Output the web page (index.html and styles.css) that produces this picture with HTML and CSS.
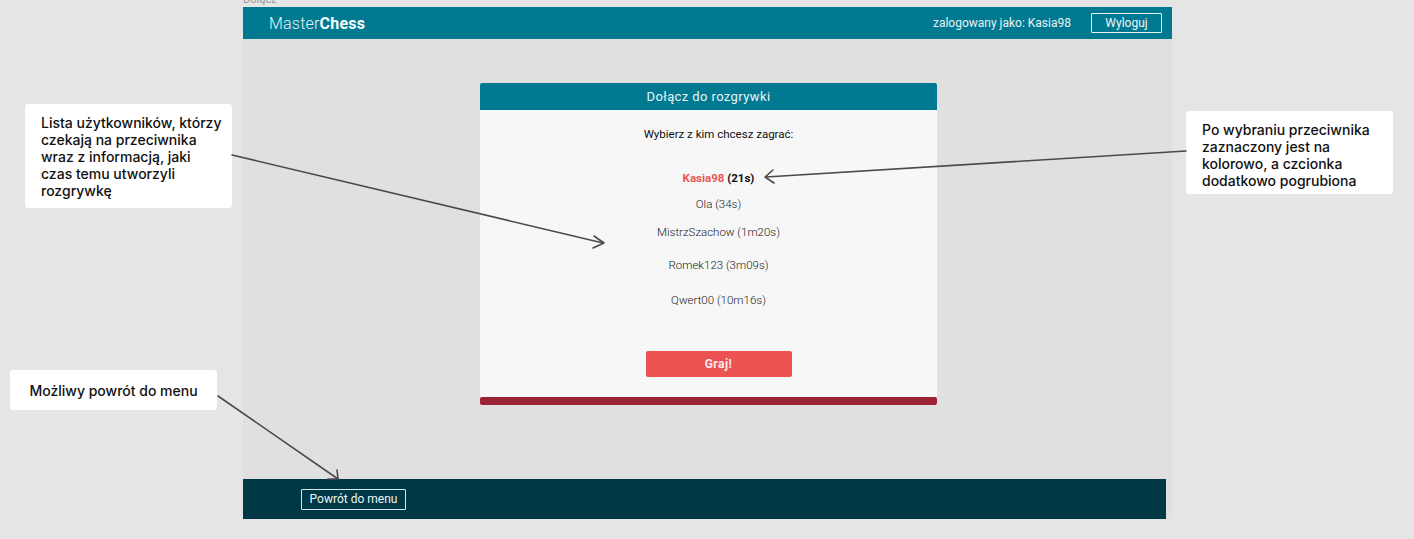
FILE: index.html
```html
<!DOCTYPE html>
<html lang="pl">
<head>
<meta charset="utf-8">
<title>MasterChess – Dołącz</title>
<link rel="stylesheet" href="styles.css">
</head>
<body>
<div class="canvas">
  <div class="frame-label">Dołącz</div>
  <div class="frame">
    <header class="topbar">
      <div class="logo"><span class="logo-light">Master</span><span class="logo-bold">Chess</span></div>
      <div class="user">
        <span class="user-text">zalogowany jako: Kasia98</span>
        <button class="btn-outline btn-logout">Wyloguj</button>
      </div>
    </header>
    <main class="main">
      <section class="card">
        <div class="card-head">Dołącz do rozgrywki</div>
        <div class="card-body">
          <p class="prompt">Wybierz z kim chcesz zagrać:</p>
          <ul class="players">
            <li class="player selected"><span class="sel-name">Kasia98</span> (21s)</li>
            <li class="player">Ola (34s)</li>
            <li class="player">MistrzSzachow (1m20s)</li>
            <li class="player">Romek123 (3m09s)</li>
            <li class="player">Qwert00 (10m16s)</li>
          </ul>
          <button class="btn-play">Graj!</button>
        </div>
        <div class="card-foot"></div>
      </section>
    </main>
    <footer class="bottombar">
      <button class="btn-outline btn-back">Powrót do menu</button>
    </footer>
  </div>

  <div class="note note-list">Lista użytkowników, którzy<br>czekają na przeciwnika<br>wraz z informacją, jaki<br>czas temu utworzyli<br>rozgrywkę</div>
  <div class="note note-selected">Po wybraniu przeciwnika<br>zaznaczony jest na<br>kolorowo, a czcionka<br>dodatkowo pogrubiona</div>
  <div class="note note-back">Możliwy powrót do menu</div>

  <svg class="arrows" width="1414" height="539" viewBox="0 0 1414 539">
    <g fill="none" stroke="#4a4a4a" stroke-width="1.6" stroke-linecap="round" stroke-linejoin="round">
      <line x1="232" y1="155" x2="603" y2="243"/>
      <polyline points="594,236 604,243 593,248"/>
      <line x1="1186" y1="151" x2="766" y2="177"/>
      <polyline points="773,170 765,177 774,183"/>
      <line x1="218" y1="396" x2="338" y2="479"/>
      <polyline points="337,470 338,479 328,479"/>
    </g>
  </svg>
</div>
</body>
</html>
```

FILE: styles.css
```css
* { box-sizing: border-box; }

html, body {
  margin: 0;
  padding: 0;
}

body {
  background: #e5e5e5;
  font-family: Roboto, "Noto Sans", Arial, sans-serif;
  overflow: hidden;
}

.canvas {
  position: relative;
  width: 1414px;
  height: 539px;
}

.frame-label {
  position: absolute;
  left: 243px;
  top: -7px;
  font-size: 11px;
  line-height: 13px;
  color: #9a9a9a;
}

.frame {
  position: absolute;
  left: 243px;
  top: 7px;
  width: 929px;
  height: 512px;
  background: #e0e0e0;
  display: flex;
  flex-direction: column;
}

.topbar {
  height: 32px;
  flex: none;
  background: #017a91;
  display: flex;
  align-items: center;
  justify-content: space-between;
  padding: 0 10px 0 26px;
  color: #eaf5f7;
}

.logo {
  font-size: 16px;
  letter-spacing: 0.2px;
}
.logo-light { font-weight: 300; }
.logo-bold { font-weight: 700; color: #f4fafb; }

.user {
  display: flex;
  align-items: center;
  gap: 20px;
}
.user-text {
  font-size: 12px;
  color: #e6f2f5;
}

.btn-outline {
  font-family: Roboto, "Noto Sans", Arial, sans-serif;
  background: transparent;
  color: #eef6f8;
  font-size: 12px;
  border: 1.5px solid #e8f3f5;
  border-radius: 1px;
  padding: 0;
  cursor: pointer;
}
.btn-logout {
  width: 71px;
  height: 20px;
}

.main {
  flex: 1;
  padding: 44px 0 0 237px;
}

.card {
  width: 457px;
}

.card-head {
  height: 27px;
  background: #017a91;
  border-radius: 2px 2px 0 0;
  color: #e8f4f6;
  font-size: 13px;
  font-weight: 400;
  letter-spacing: 0.4px;
  display: flex;
  align-items: center;
  justify-content: center;
}

.card-body {
  background: #f7f7f7;
  height: 287px;
  padding: 16px 0 0 20px;
  display: flex;
  flex-direction: column;
  align-items: center;
}

.prompt {
  margin: 0;
  font-size: 11.5px;
  line-height: 16px;
  color: #111;
}

.players {
  list-style: none;
  margin: 0;
  padding: 0;
  display: flex;
  flex-direction: column;
  align-items: center;
}

.player {
  font-size: 11.5px;
  line-height: 16px;
  color: #222;
  font-weight: 300;
}
.player:nth-child(1) { margin-top: 28px; }
.player:nth-child(2) { margin-top: 10px; }
.player:nth-child(3) { margin-top: 12px; }
.player:nth-child(4) { margin-top: 17px; }
.player:nth-child(5) { margin-top: 19px; }

.player.selected {
  font-weight: 700;
  color: #111;
}
.sel-name { color: #e85656; }

.btn-play {
  margin-top: 43px;
  width: 146px;
  height: 26px;
  background: #ed5253;
  border: none;
  border-radius: 2px;
  color: #fbeaea;
  font-family: Roboto, "Noto Sans", Arial, sans-serif;
  font-weight: 700;
  font-size: 12px;
  letter-spacing: 0.5px;
  cursor: pointer;
}

.card-foot {
  height: 8px;
  background: #9b2335;
  border-radius: 2px;
}

.bottombar {
  height: 40px;
  width: 923px;
  flex: none;
  background: #003845;
  display: flex;
  align-items: center;
  padding-left: 58px;
}
.btn-back {
  width: 105px;
  height: 21px;
  border-color: #d8ecef;
}

.note {
  position: absolute;
  background: #ffffff;
  border-radius: 3px;
  font-family: Inter, "Noto Sans", Arial, sans-serif;
  font-weight: 500;
  font-size: 14px;
  line-height: 17px;
  color: #111;
  width: 207px;
  white-space: nowrap;
}
.note-list {
  left: 25px;
  top: 104px;
  height: 104px;
  padding: 10px 0 0 16px;
}
.note-selected {
  left: 1186px;
  top: 111px;
  height: 83px;
  padding: 10px 0 0 16px;
}
.note-back {
  left: 10px;
  top: 370px;
  height: 40px;
  display: flex;
  align-items: center;
  justify-content: center;
}

.arrows {
  position: absolute;
  left: 0;
  top: 0;
  pointer-events: none;
}
```
